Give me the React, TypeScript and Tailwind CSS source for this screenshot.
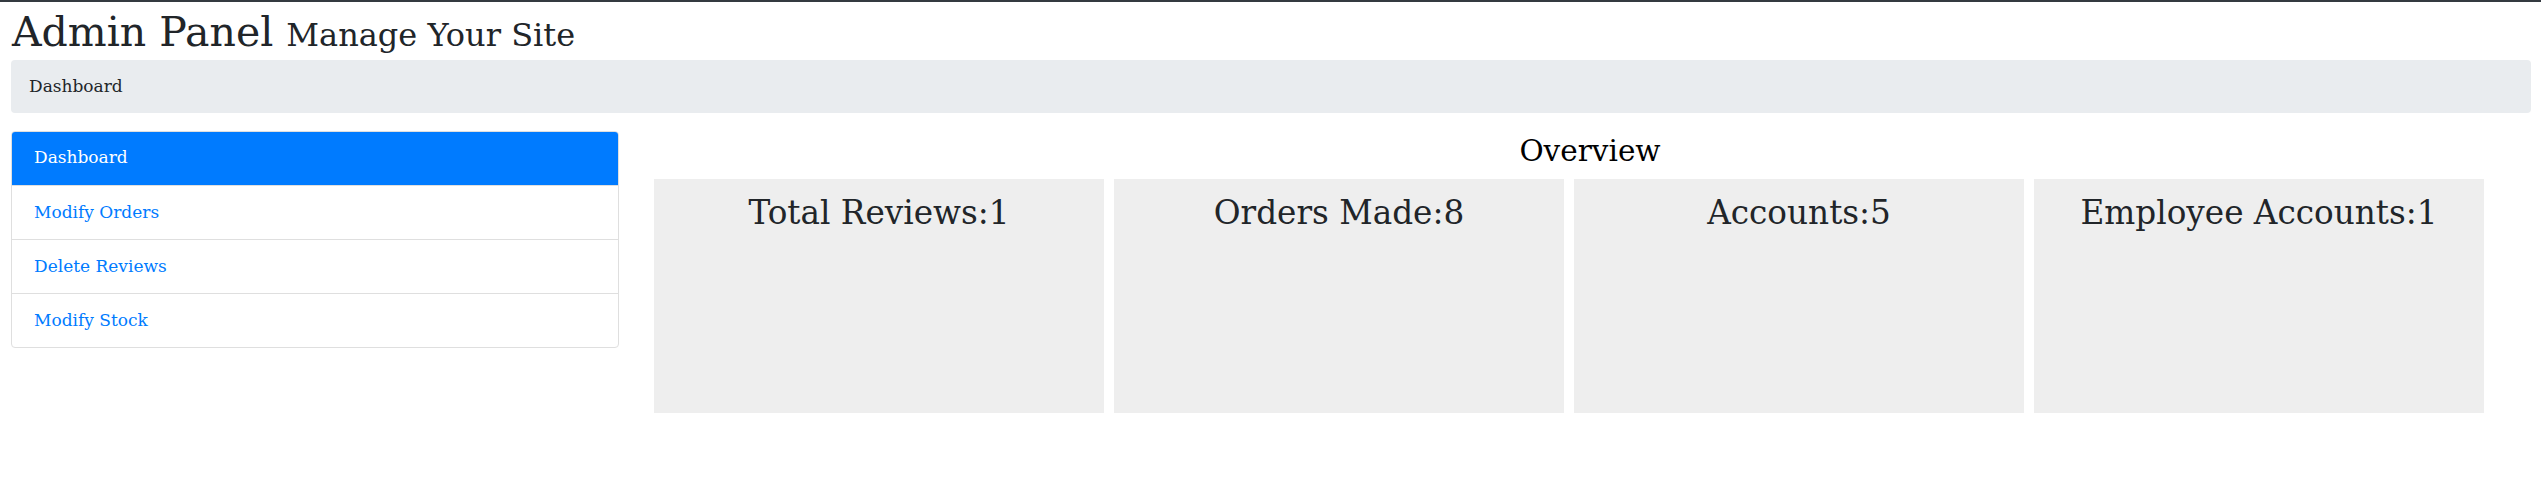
import React from "react";

const items = ["Dashboard", "Modify Orders", "Delete Reviews", "Modify Stock"];
const stats = [
  "Total Reviews:1",
  "Orders Made:8",
  "Accounts:5",
  "Employee Accounts:1",
];

export default function App() {
  return (
    <div className="w-[2541px] h-[491px] bg-white text-[#212529] font-['DejaVu_Serif',serif]">
      <div className="h-[2px] bg-[#343a40]" />
      <div className="pl-[11px] pr-[10px]">
        <h1 className="h-[52px] pt-[6px] pl-[1px] text-[41px] leading-[48px] text-[#212529] whitespace-nowrap">
          Admin Panel{" "}
          <span className="text-[32px]">Manage Your Site</span>
        </h1>
        <div className="mt-[6px] h-[53px] rounded-[4px] bg-[#e9ecef] flex items-center pl-[18px] text-[17px]">
          Dashboard
        </div>
        <div className="mt-[18px] flex items-start">
          <div className="w-[608px] shrink-0 border border-[#dfdfdf] rounded-[4px] overflow-hidden flex flex-col">
            {items.map((it, i) => (
              <div
                key={it}
                className={
                  i === 0
                    ? "h-[54px] bg-[#007bff] text-white flex items-center text-[17px] -mt-px -mx-px pl-[23px]"
                    : "h-[54px] border-t border-[#dfdfdf] text-[#007bff] flex items-center pl-[22px] text-[17px]"
                }
              >
                {it}
              </div>
            ))}
          </div>
          <div className="ml-[30px] flex-1 flex flex-col">
            <div className="h-[48px] text-center text-[29.5px] leading-[40px] text-black">
              Overview
            </div>
            <div className="pl-[5px] flex gap-[10px]">
              {stats.map((s) => (
                <div
                  key={s}
                  className="w-[450px] h-[234px] bg-[#eeeeee] text-center text-[32.7px] leading-[40px] pt-[14px] whitespace-nowrap"
                >
                  {s}
                </div>
              ))}
            </div>
          </div>
        </div>
      </div>
    </div>
  );
}
